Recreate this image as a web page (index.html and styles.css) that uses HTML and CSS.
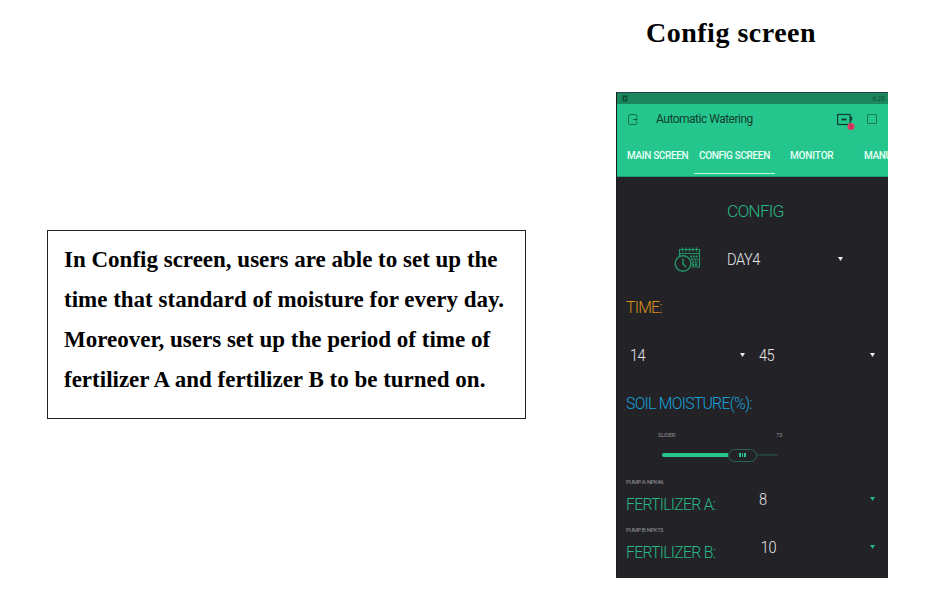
FILE: index.html
```html
<!DOCTYPE html>
<html lang="en">
<head>
<meta charset="utf-8">
<title>Config screen</title>
<link rel="stylesheet" href="styles.css">
</head>
<body>
<main class="slide">
  <section class="note">
    <p>In Config screen, users are able to set up the</p>
    <p>time that standard of moisture for every day.</p>
    <p>Moreover, users set up the period of time of</p>
    <p>fertilizer A and fertilizer B to be turned on.</p>
  </section>
  <section class="demo">
    <h1>Config screen</h1>
    <div class="phone">
      <div class="status">
        <svg width="6" height="7" viewBox="0 0 6 7"><rect x=".5" y=".5" width="5" height="6" fill="#0b4f37"/><path d="M2 2.500h2v2H2z" fill="#1b8a61"/></svg>
        <span>6:28</span>
      </div>
      <header class="appbar">
        <svg class="exit" width="12" height="12" viewBox="0 0 12 12" fill="none" stroke="#126b4b" stroke-width="1"><path d="M10 3.500v-1a2 2 0 0 0-2-2H3.500a2 2 0 0 0-2 2v6a2 2 0 0 0 2 2H8a2 2 0 0 0 2-2v-1M6 5.500h4.500M8.500 4l2 1.500-2 1.500"/></svg>
        <span class="title">Automatic Watering</span>
        <svg class="device" width="20" height="20" viewBox="0 0 20 20"><rect x="2.600" y="4.500" width="12.500" height="10" fill="none" stroke="#0d3b2c" stroke-width="1.200"/><path d="M6.500 9.500h5" stroke="#0d3b2c" stroke-width="1.800"/><path d="M16.200 6.500v4" stroke="#0d3b2c" stroke-width="2"/><circle cx="16" cy="16.500" r="3.500" fill="#df3d64"/><path d="M16 14.500v2.600M16 17.700v1" stroke="#8c1739" stroke-width="1"/></svg>
        <svg class="stop" width="12" height="12" viewBox="0 0 12 12"><rect x="1.500" y="1.500" width="9" height="9" rx=".5" fill="none" stroke="#167a55"/></svg>
      </header>
      <nav class="tabs">
        <span class="tab main">MAIN SCREEN</span><span class="tab active">CONFIG SCREEN</span><span class="tab monitor">MONITOR</span><span class="tab manual">MANU</span>
      </nav>
      <div class="content">
        <div class="row"><h2 class="config">CONFIG</h2></div>
        <div class="row">
          <svg class="schedule" width="28" height="28" viewBox="0 0 28 28" fill="none" stroke="#229567" stroke-width="1.200"><path d="M5.500 10V3.500h20v17.500h-8M5.500 7.500h20M8.500 1.500v4M12 1.500v4M15.500 1.500v4M19 1.500v4M22.500 1.500v4"/><path d="M16 10.500h8M17 13.500h7M18 16.500h6M18 19h6" stroke-width="2" stroke-dasharray="2 .8"/><circle cx="9" cy="17.500" r="7.800" fill="#222227" stroke-width="1.400"/><path d="M9 12.500V18l3 3" stroke-width="1.500"/></svg>
          <span class="value day">DAY4</span><i class="arrow"></i>
        </div>
        <div class="row"><h2 class="time">TIME:</h2></div>
        <div class="row"><span class="value hour">14</span><i class="arrow"></i><span class="value minute">45</span><i class="arrow"></i></div>
        <div class="row"><h2 class="soil">SOIL MOISTURE(%):</h2></div>
        <div class="slider">
          <div class="labels"><span>SLIDER</span><span>73</span></div>
          <div class="track"><b class="done"></b><span class="thumb"><i></i><i></i><i></i></span><b class="rest"></b></div>
        </div>
        <div class="pump"><div class="name"><small>PUMP A: NPK46</small><h2>FERTILIZER A:</h2></div><span class="value">8</span><i class="arrow green"></i></div>
        <div class="pump"><div class="name"><small>PUMP B: NPK15</small><h2>FERTILIZER B:</h2></div><span class="value ten">10</span><i class="arrow green"></i></div>
      </div>
    </div>
  </section>
</main>
</body>
</html>
```
FILE: styles.css
```css
* { box-sizing: border-box; }
body { margin: 0; background: #fff; color: #000; }
h1, h2, p { margin: 0; }
svg { display: block; flex: none; }
.slide { display: flex; width: 933px; height: 611px; overflow: hidden; }
.note {
  width: 479px; height: 189px; margin: 230px 0 0 47px; padding: 9px 0 0 16px;
  border: 1px solid #222; font: bold 23px/40px "Liberation Serif", serif; white-space: nowrap;
}
.demo { width: 272px; margin-left: 90px; }
h1 { height: 92px; padding: 15px 0 0 30px; font: bold 28px/36px "Liberation Serif", serif; letter-spacing: .5px; white-space: nowrap; }
.phone {
  width: 272px; height: 486px; overflow: hidden; background: #222227; color: #e8e8e9;
  font-family: Roboto, "Liberation Sans", sans-serif; border-top: 1px solid #253c4d; border-left: 1px solid #1a1b22;
}
.status {
  display: flex; align-items: center; justify-content: space-between; height: 11px;
  padding: 0 3px 0 5px; background: #1c875f; color: #0b4f37; font-size: 6.500px;
}
.appbar { display: flex; height: 30px; background: #25c68d; }
.exit { margin: 10px 0 0 10px; }
.title { width: 179px; margin-left: 17px; color: #12402f; font-size: 12px; line-height: 31px; white-space: nowrap; letter-spacing: -.5px; }
.device { margin-top: 6px; }
.stop { margin: 9px 0 0 11px; }
.tabs { display: flex; height: 43px; overflow: hidden; background: #25c68d; border-bottom: 1px solid #1b9c70; color: #e8fff6; font-size: 10px; font-weight: 500; line-height: 43px; white-space: nowrap; }
.tab { flex: none; height: 40px; letter-spacing: -.35px; }
.main { width: 77px; padding-left: 10px; }
.active { width: 81px; padding-left: 5px; border-bottom: 1px solid #c5f5e3; }
.monitor { margin-left: 15px; width: 74px; letter-spacing: -.15px; }
.content { padding-top: 10px; }
.row { display: flex; align-items: center; height: 48px; }
h2 { font-size: 17px; font-weight: 300; line-height: 24px; letter-spacing: -.8px; white-space: nowrap; transform: scaleX(.93); transform-origin: left; }
.config { margin-left: 110px; color: #28b985; transform: scaleX(1.02); }
.schedule { margin-left: 57px; margin-top: 2px; }
.value { padding-top: 1px; font-size: 16px; font-weight: 300; line-height: 24px; letter-spacing: -.5px; transform: scaleX(.91); transform-origin: left; }
.day { width: 111px; margin-left: 25px; }
.arrow { flex: none; width: 5px; height: 4px; background: #efefef; clip-path: polygon(0 0, 100% 0, 50% 100%); }
.time { margin-left: 9px; color: #dc9114; }
.hour { width: 110px; margin-left: 13px; }
.minute { width: 111px; margin-left: 14px; }
.soil { margin-left: 9px; color: #17a3dc; }
.slider { height: 48px; padding: 4px 106px 0 41px; }
.labels { display: flex; justify-content: space-between; height: 8px; color: #8b8b90; font-size: 6px; line-height: 8px; letter-spacing: -.4px; }
.track { display: flex; align-items: center; height: 14px; margin-top: 9px; padding: 0 4px; }
.done { width: 66px; height: 4px; border-radius: 2px 0 0 2px; background: #25c68d; }
.thumb { display: flex; align-items: center; justify-content: center; gap: 1px; width: 29px; height: 13px; border: 1px solid #286450; border-radius: 7px; }
.thumb i { width: 1.500px; height: 4px; background: #25c68d; }
.rest { width: 21px; height: 2px; background: #263f39; }
.pump { display: flex; height: 48px; }
.name { width: 134px; padding: 3px 0 0 9px; }
.name small { display: block; height: 8px; color: #97979c; font-size: 6px; font-weight: 400; line-height: 8px; letter-spacing: -.5px; white-space: nowrap; }
.name h2 { margin-top: 6px; color: #28b985; }
.pump .value { width: 111px; margin: 12px 0 0 8px; }
.pump .arrow { margin-top: 22px; background: #25b681; }
.pump .ten { padding-left: 2px; }
```
